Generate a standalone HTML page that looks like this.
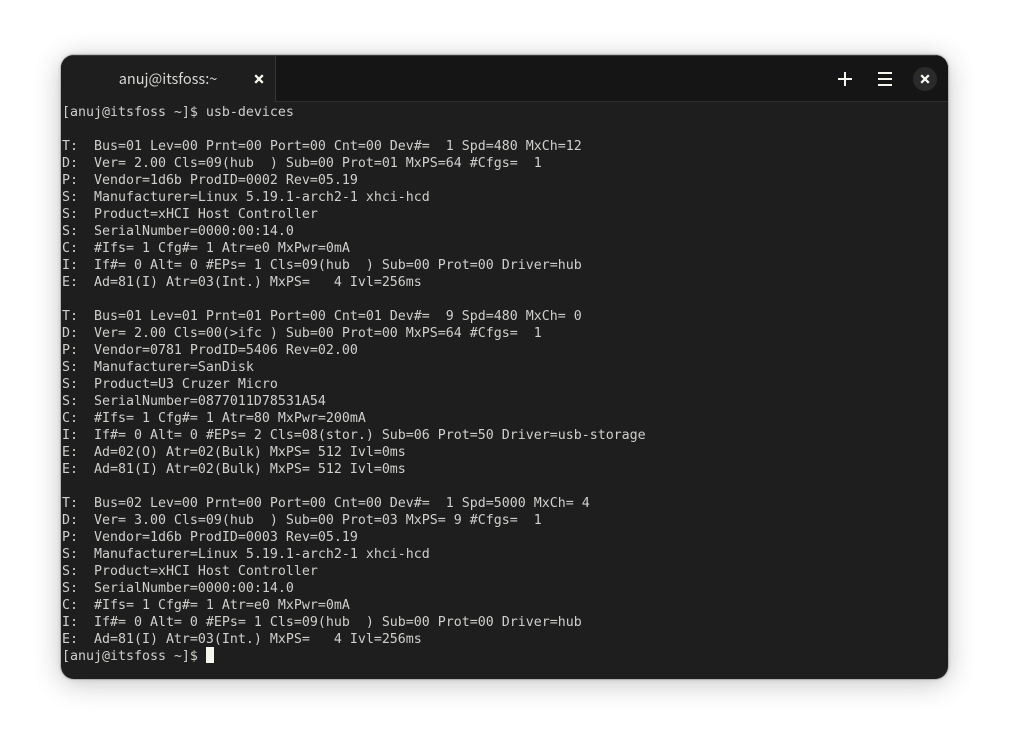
<!DOCTYPE html>
<html><head><meta charset="utf-8">
<style>
html,body{margin:0;padding:0;background:#fff;width:1009px;height:746px;overflow:hidden}
#win{position:absolute;left:61px;top:55px;width:887px;height:624px;box-sizing:border-box;background:#1e1e1e;border-radius:13px;overflow:hidden;box-shadow:0 4px 28px rgba(0,0,0,.24),0 0 5px rgba(0,0,0,.16),0 0 0 1px rgba(0,0,0,.14)}
#hdr{position:absolute;left:0;top:0;width:887px;background:#151515;border-bottom:1px solid #2e2e2e;border-top:1px solid #3a3a3a;box-sizing:content-box;height:45px}
#tab{position:absolute;left:0;top:0;width:214px;height:46px;background:#1e1e1e;border-right:1px solid #363636}
#title{position:absolute;left:-1px;top:13px;width:216px;text-align:center;font:14.5px/20px "Noto Sans CJK JP","Liberation Sans",sans-serif;color:#d8d8d4}
svg{position:absolute;left:0;top:0}
pre{position:absolute;left:1px;top:49px;margin:0;font-family:"DejaVu Sans Mono",monospace;font-size:13.3px;line-height:17px;letter-spacing:-.01px;color:#d0cfcc;white-space:pre}
#cur{position:absolute;left:145px;top:592px;width:8px;height:16px;background:#f6f5ee}
</style></head><body>
<div id="win">
<div id="hdr"><div id="tab"><div id="title">anuj@itsfoss:~</div></div></div>
<svg width="887" height="50" viewBox="0 0 887 50">
<path d="M194.2 20.2l7.6 7.6M201.8 20.2l-7.6 7.6" stroke="#f6f5ee" stroke-width="2.3" fill="none"/>
<path d="M784 17v14M777 24h14" stroke="#f6f5ee" stroke-width="2" fill="none"/>
<path d="M817 18h14M817 24h14M817 30h14" stroke="#f6f5ee" stroke-width="2" fill="none"/>
<circle cx="864" cy="24" r="12" fill="#2a2a2a"/>
<path d="M860.2 20.2l7.6 7.6M867.8 20.2l-7.6 7.6" stroke="#f6f5ee" stroke-width="2.3" fill="none"/>
</svg>
<pre>[anuj@itsfoss ~]$ usb-devices

T:  Bus=01 Lev=00 Prnt=00 Port=00 Cnt=00 Dev#=  1 Spd=480 MxCh=12
D:  Ver= 2.00 Cls=09(hub  ) Sub=00 Prot=01 MxPS=64 #Cfgs=  1
P:  Vendor=1d6b ProdID=0002 Rev=05.19
S:  Manufacturer=Linux 5.19.1-arch2-1 xhci-hcd
S:  Product=xHCI Host Controller
S:  SerialNumber=0000:00:14.0
C:  #Ifs= 1 Cfg#= 1 Atr=e0 MxPwr=0mA
I:  If#= 0 Alt= 0 #EPs= 1 Cls=09(hub  ) Sub=00 Prot=00 Driver=hub
E:  Ad=81(I) Atr=03(Int.) MxPS=   4 Ivl=256ms

T:  Bus=01 Lev=01 Prnt=01 Port=00 Cnt=01 Dev#=  9 Spd=480 MxCh= 0
D:  Ver= 2.00 Cls=00(&gt;ifc ) Sub=00 Prot=00 MxPS=64 #Cfgs=  1
P:  Vendor=0781 ProdID=5406 Rev=02.00
S:  Manufacturer=SanDisk
S:  Product=U3 Cruzer Micro
S:  SerialNumber=0877011D78531A54
C:  #Ifs= 1 Cfg#= 1 Atr=80 MxPwr=200mA
I:  If#= 0 Alt= 0 #EPs= 2 Cls=08(stor.) Sub=06 Prot=50 Driver=usb-storage
E:  Ad=02(O) Atr=02(Bulk) MxPS= 512 Ivl=0ms
E:  Ad=81(I) Atr=02(Bulk) MxPS= 512 Ivl=0ms

T:  Bus=02 Lev=00 Prnt=00 Port=00 Cnt=00 Dev#=  1 Spd=5000 MxCh= 4
D:  Ver= 3.00 Cls=09(hub  ) Sub=00 Prot=03 MxPS= 9 #Cfgs=  1
P:  Vendor=1d6b ProdID=0003 Rev=05.19
S:  Manufacturer=Linux 5.19.1-arch2-1 xhci-hcd
S:  Product=xHCI Host Controller
S:  SerialNumber=0000:00:14.0
C:  #Ifs= 1 Cfg#= 1 Atr=e0 MxPwr=0mA
I:  If#= 0 Alt= 0 #EPs= 1 Cls=09(hub  ) Sub=00 Prot=00 Driver=hub
E:  Ad=81(I) Atr=03(Int.) MxPS=   4 Ivl=256ms
[anuj@itsfoss ~]$ </pre>
<div id="cur"></div>
</div>
</body></html>
